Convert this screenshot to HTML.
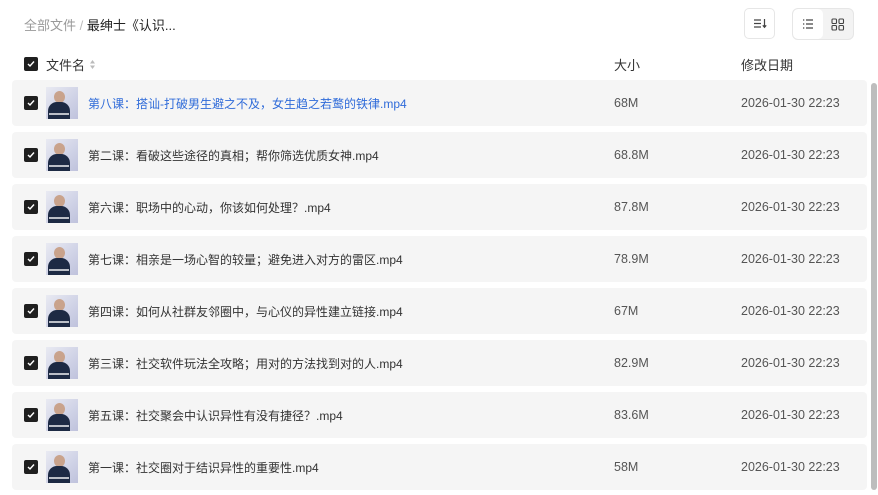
<!DOCTYPE html>
<html><head><meta charset="utf-8"><style>
*{margin:0;padding:0;box-sizing:border-box}
body{width:878px;height:495px;overflow:hidden;background:#fff;font-family:"Liberation Sans","Noto Sans CJK SC",sans-serif;color:#333;position:relative}
.abs{position:absolute}
.cb{position:absolute;width:14px;height:14px;background:#1f1f1f;border-radius:2px}
.cb svg{position:absolute;left:3px;top:3px}
.row{position:absolute;left:12px;width:855px;height:46px;background:#f5f5f5;border-radius:4px}
.row .cb{left:12px;top:16px}
.th{position:absolute;left:34px;top:7px;width:32px;height:32px;background:linear-gradient(135deg,#e9eaf2,#cfd2e6 60%,#bfc2dc);overflow:hidden}
.th:before{content:"";position:absolute;left:8px;top:4px;width:11px;height:12px;border-radius:50%;background:#c9a38c}
.th:after{content:"";position:absolute;left:2px;top:15px;width:22px;height:17px;border-radius:9px 9px 0 0;background:#1d2a44}
.th i{position:absolute;left:3px;bottom:4px;width:20px;height:2px;background:#fff;z-index:2;opacity:.7}
.nm{position:absolute;left:76px;top:15px;font-size:12px;color:#333;white-space:nowrap}
.sz{position:absolute;left:602px;top:16px;font-size:12.5px;color:#555}
.dt{position:absolute;left:729px;top:16px;font-size:12.5px;color:#555}
</style></head><body>
<div class="abs" style="left:24px;top:15px;font-size:13px;color:#999">全部文件 <span style="color:#bbb">/</span> <span style="color:#222">最绅士《认识...</span></div>
<div class="abs" style="left:744px;top:8px;width:31px;height:31px;border:1px solid #e6e6e6;border-radius:5px">
<svg width="29" height="29" viewBox="0 0 29 29"><path d="M9 11h7M9 14.5h7M9 18h7" stroke="#444" stroke-width="1.2"/><path d="M19.5 10v8M17.8 16.3l1.7 2 1.7-2" stroke="#444" stroke-width="1.2" fill="none"/></svg></div>
<div class="abs" style="left:792px;top:8px;width:62px;height:32px;border:1px solid #e6e6e6;border-radius:6px;background:#f3f3f3;overflow:hidden">
<div class="abs" style="left:0;top:0;width:30px;height:30px;background:#fff;border-radius:5px"></div>
<svg class="abs" style="left:0;top:0" width="60" height="30" viewBox="0 0 60 30"><path d="M10 11h1.3M10 15h1.3M10 19h1.3M13 11h7M13 15h7M13 19h7" stroke="#444" stroke-width="1.2"/><rect x="39" y="10" width="4.5" height="4.5" rx="1" fill="none" stroke="#444" stroke-width="1.1"/><rect x="46" y="10" width="4.5" height="4.5" rx="1" fill="none" stroke="#444" stroke-width="1.1"/><rect x="39" y="16.5" width="4.5" height="4.5" rx="1" fill="none" stroke="#444" stroke-width="1.1"/><rect x="46" y="16.5" width="4.5" height="4.5" rx="1" fill="none" stroke="#444" stroke-width="1.1"/></svg></div>
<div class="cb" style="left:24px;top:57px"><svg width="8" height="8" viewBox="0 0 8 8"><path d="M1 4l2 2 4-4.5" stroke="#fff" stroke-width="1.4" fill="none"/></svg></div>
<div class="abs" style="left:46px;top:55px;font-size:13px;color:#333">文件名 <svg width="7" height="11" viewBox="0 0 7 11"><path d="M3.5 1L6 4.5H1zM3.5 10L6 6.5H1z" fill="#bbb"/></svg></div>
<div class="abs" style="left:614px;top:55px;font-size:13px">大小</div>
<div class="abs" style="left:741px;top:55px;font-size:13px">修改日期</div>
<div class="abs" style="left:871px;top:83px;width:6px;height:407px;background:#bdbdbd;border-radius:3px"></div>

<div class="row" style="top:80px"><div class="cb"><svg width="8" height="8" viewBox="0 0 8 8"><path d="M1 4l2 2 4-4.5" stroke="#fff" stroke-width="1.4" fill="none"/></svg></div><div class="th"><i></i></div><div class="nm" style="color:#2f6bd9">第八课：搭讪-打破男生避之不及，女生趋之若鹜的铁律.mp4</div><div class="sz">68M</div><div class="dt">2026-01-30 22:23</div></div>
<div class="row" style="top:132px"><div class="cb"><svg width="8" height="8" viewBox="0 0 8 8"><path d="M1 4l2 2 4-4.5" stroke="#fff" stroke-width="1.4" fill="none"/></svg></div><div class="th"><i></i></div><div class="nm">第二课：看破这些途径的真相；帮你筛选优质女神.mp4</div><div class="sz">68.8M</div><div class="dt">2026-01-30 22:23</div></div>
<div class="row" style="top:184px"><div class="cb"><svg width="8" height="8" viewBox="0 0 8 8"><path d="M1 4l2 2 4-4.5" stroke="#fff" stroke-width="1.4" fill="none"/></svg></div><div class="th"><i></i></div><div class="nm">第六课：职场中的心动，你该如何处理？.mp4</div><div class="sz">87.8M</div><div class="dt">2026-01-30 22:23</div></div>
<div class="row" style="top:236px"><div class="cb"><svg width="8" height="8" viewBox="0 0 8 8"><path d="M1 4l2 2 4-4.5" stroke="#fff" stroke-width="1.4" fill="none"/></svg></div><div class="th"><i></i></div><div class="nm">第七课：相亲是一场心智的较量；避免进入对方的雷区.mp4</div><div class="sz">78.9M</div><div class="dt">2026-01-30 22:23</div></div>
<div class="row" style="top:288px"><div class="cb"><svg width="8" height="8" viewBox="0 0 8 8"><path d="M1 4l2 2 4-4.5" stroke="#fff" stroke-width="1.4" fill="none"/></svg></div><div class="th"><i></i></div><div class="nm">第四课：如何从社群友邻圈中，与心仪的异性建立链接.mp4</div><div class="sz">67M</div><div class="dt">2026-01-30 22:23</div></div>
<div class="row" style="top:340px"><div class="cb"><svg width="8" height="8" viewBox="0 0 8 8"><path d="M1 4l2 2 4-4.5" stroke="#fff" stroke-width="1.4" fill="none"/></svg></div><div class="th"><i></i></div><div class="nm">第三课：社交软件玩法全攻略；用对的方法找到对的人.mp4</div><div class="sz">82.9M</div><div class="dt">2026-01-30 22:23</div></div>
<div class="row" style="top:392px"><div class="cb"><svg width="8" height="8" viewBox="0 0 8 8"><path d="M1 4l2 2 4-4.5" stroke="#fff" stroke-width="1.4" fill="none"/></svg></div><div class="th"><i></i></div><div class="nm">第五课：社交聚会中认识异性有没有捷径？.mp4</div><div class="sz">83.6M</div><div class="dt">2026-01-30 22:23</div></div>
<div class="row" style="top:444px"><div class="cb"><svg width="8" height="8" viewBox="0 0 8 8"><path d="M1 4l2 2 4-4.5" stroke="#fff" stroke-width="1.4" fill="none"/></svg></div><div class="th"><i></i></div><div class="nm">第一课：社交圈对于结识异性的重要性.mp4</div><div class="sz">58M</div><div class="dt">2026-01-30 22:23</div></div>
</body></html>
